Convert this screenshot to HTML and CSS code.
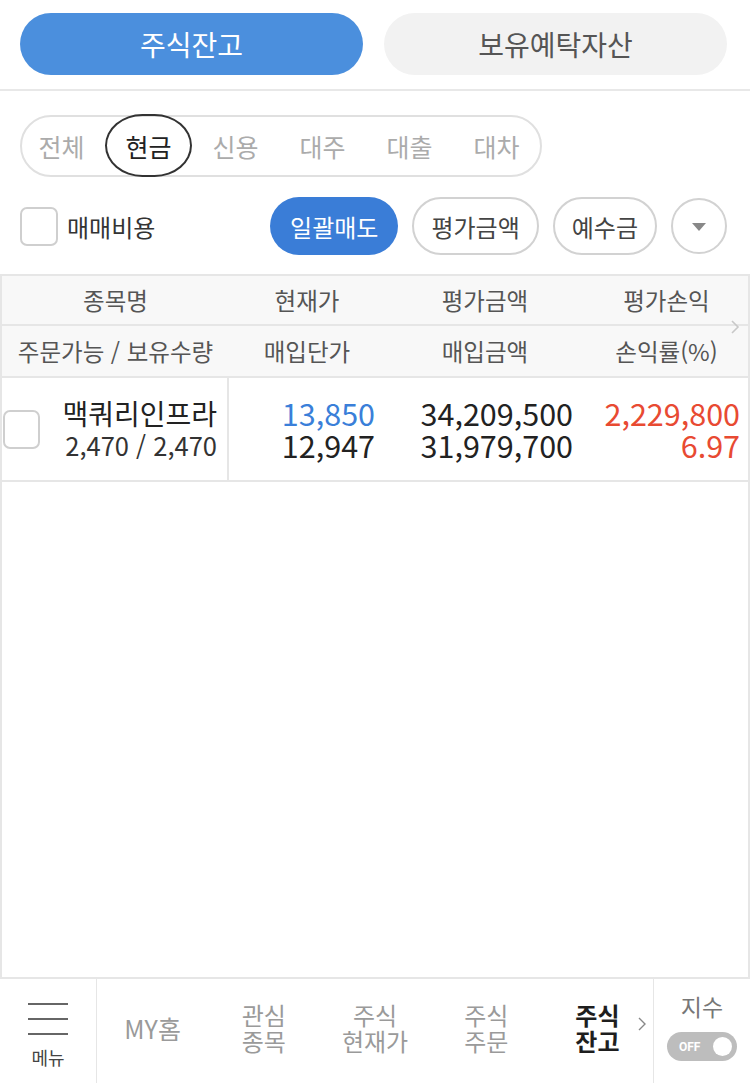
FILE: index.html
```html
<!DOCTYPE html>
<html lang="ko">
<head>
    <meta charset="UTF-8">
    <title>주식잔고</title>
    <link rel="stylesheet" href="styles.css">
</head>
<body>
    <div class="top-tabs">
        <button class="top-tab on">주식잔고</button>
        <button class="top-tab">보유예탁자산</button>
    </div>

    <div class="seg">
        <div class="seg-items">
            <span class="seg-item">전체</span>
            <span class="seg-item on">현금</span>
            <span class="seg-item">신용</span>
            <span class="seg-item">대주</span>
            <span class="seg-item">대출</span>
            <span class="seg-item">대차</span>
        </div>
    </div>

    <div class="action-row">
        <label class="chk-label"><span class="chk"></span>매매비용</label>
        <div class="action-btns">
            <button class="pill blue">일괄매도</button>
            <button class="pill">평가금액</button>
            <button class="pill">예수금</button>
            <button class="pill round" title="더보기">
                <svg width="16" height="10" viewBox="0 0 16 10"><path d="M1 1h14L8 9z" fill="#888"/></svg>
            </button>
        </div>
    </div>

    <!-- 잔고 테이블 -->
    <div class="table">
        <div class="thead">
            <div class="hrow">
                <span>종목명</span><span>현재가</span><span>평가금액</span><span>평가손익</span>
            </div>
            <div class="hrow">
                <span>주문가능 / 보유수량</span><span>매입단가</span><span>매입금액</span><span>손익률(%)</span>
            </div>
            <svg class="more" width="10" height="14" viewBox="0 0 10 14"><path d="M2 1l6 6-6 6" fill="none" stroke="#c8c8c8" stroke-width="1.6"/></svg>
        </div>
        <div class="trow">
            <div class="cell name-cell">
                <span class="chk"></span>
                <div class="name-text">
                    <div class="stock-name">맥쿼리인프라</div>
                    <div class="qty">2,470 / 2,470</div>
                </div>
            </div>
            <div class="cell num">
                <div class="blue-txt">13,850</div>
                <div>12,947</div>
            </div>
            <div class="cell num">
                <div>34,209,500</div>
                <div>31,979,700</div>
            </div>
            <div class="cell num last">
                <div class="red-txt">2,229,800</div>
                <div class="red-txt">6.97</div>
            </div>
        </div>
        <div class="tbody-empty"></div>
    </div>

    <!-- 하단 메뉴 -->
    <div class="nav">
        <div class="nav-menu">
            <span class="bar"></span><span class="bar"></span><span class="bar"></span>
            <span class="menu-txt">메뉴</span>
        </div>
        <div class="nav-items">
            <div class="nav-item">MY홈</div>
            <div class="nav-item">관심<br>종목</div>
            <div class="nav-item">주식<br>현재가</div>
            <div class="nav-item">주식<br>주문</div>
            <div class="nav-item on">주식<br>잔고
                <svg class="nav-arrow" width="10" height="16" viewBox="0 0 10 16"><path d="M2 2l6 6-6 6" fill="none" stroke="#888" stroke-width="1.4"/></svg>
            </div>
        </div>
        <div class="nav-index">
            <span class="index-txt">지수</span>
            <span class="toggle"><span class="toggle-txt">OFF</span><span class="knob"></span></span>
        </div>
    </div>
</body>
</html>
```

FILE: styles.css
```css
html, body {
    height: 100%;
}
body {
    margin: 0;
    height: 1083px;
    display: flex;
    flex-direction: column;
    background: #fff;
    color: #222;
    font-family: 'Noto Sans CJK KR', 'Noto Sans', sans-serif;
    overflow: hidden;
}
button {
    font-family: inherit;
    cursor: pointer;
}

/* 상단 탭 */
.top-tabs {
    display: flex;
    gap: 21px;
    padding: 13px 23px 14px 20px;
    border-bottom: 2px solid #e8e8e8;
}
.top-tab {
    flex: 1;
    height: 62px;
    border: none;
    border-radius: 31px;
    background: #f2f2f2;
    color: #555;
    font-size: 28px;
}
.top-tab.on {
    background: #4b8fdd;
    color: #fff;
}

/* 구분 필터 */
.seg {
    margin: 24px 0 0 20px;
    width: 518px;
    height: 58px;
    border: 2px solid #e0e0e0;
    border-radius: 31px;
}
.seg-items {
    display: flex;
    margin: -3px 0 0 -4px;
}
.seg-item {
    width: 87.5px;
    height: 63px;
    box-sizing: border-box;
    display: flex;
    align-items: center;
    justify-content: center;
    font-size: 25px;
    color: #ababab;
}
.seg-item.on {
    border: 2px solid #333;
    border-radius: 38px / 32px;
    color: #222;
}

/* 매매비용 + 버튼 */
.action-row {
    display: flex;
    align-items: center;
    justify-content: space-between;
    padding: 0 23px 0 20px;
    margin-top: 20px;
    height: 58px;
}
.chk-label {
    display: flex;
    align-items: center;
    gap: 9px;
    font-size: 24px;
    color: #333;
}
.chk {
    width: 38px;
    height: 39px;
    box-sizing: border-box;
    border: 2px solid #cfcfcf;
    border-radius: 7px;
    flex-shrink: 0;
    background: #fff;
}
.action-btns {
    display: flex;
    align-items: center;
    gap: 14px;
}
.pill {
    height: 58px;
    padding: 0 17px;
    border: 2px solid #d2d2d2;
    border-radius: 29px;
    background: #fff;
    color: #444;
    font-size: 24px;
}
.pill.blue {
    background: #3a7dd7;
    border: none;
    color: #fff;
    padding: 0 20px;
}
.pill.round {
    width: 56px;
    height: 56px;
    padding: 0;
    border-radius: 50%;
    display: flex;
    align-items: center;
    justify-content: center;
}
.pill.round svg { margin-top: 2px; }

/* 테이블 */
.table {
    flex: 1;
    margin-top: 19px;
    display: flex;
    flex-direction: column;
    border: 2px solid #e6e6e6;
    border-bottom: none;
}
.thead {
    position: relative;
    background: #f8f8f8;
}
.hrow {
    display: grid;
    grid-template-columns: 227px 156px 200px 163px;
    height: 48px;
    align-items: center;
    text-align: center;
    font-size: 23.5px;
    color: #555;
    border-bottom: 2px solid #e6e6e6;
}
.hrow + .hrow {
    height: 50px;
}
.more {
    position: absolute;
    right: 8px;
    top: 44px;
}
.trow {
    display: grid;
    grid-template-columns: 227px 156px 200px 163px;
    height: 102px;
    border-bottom: 2px solid #e6e6e6;
}
.cell {
    display: flex;
    flex-direction: column;
    justify-content: center;
    align-items: flex-end;
    font-size: 30.5px;
    line-height: 32px;
    color: #222;
}
.name-cell {
    flex-direction: row;
    align-items: center;
    justify-content: space-between;
    border-right: 2px solid #e6e6e6;
    padding: 0 10px 0 1px;
}
.name-cell .chk {
    width: 37px;
    margin-top: 1px;
}
.name-text {
    text-align: right;
}
.stock-name {
    font-size: 28px;
    line-height: 32px;
}
.qty {
    font-size: 25.5px;
    line-height: 32px;
    color: #333;
}
.num { padding-right: 10px; }
.num:nth-child(3) { padding-right: 12px; }
.num.last { padding-right: 8px; }
.blue-txt { color: #3a7fd9; }
.red-txt { color: #e84a32; }
.tbody-empty { flex: 1; }

/* 하단 메뉴 */
.nav {
    height: 104px;
    border-top: 2px solid #e6e6e6;
    display: flex;
}
.nav-menu {
    width: 97px;
    border-right: 1px solid #e6e6e6;
    display: flex;
    flex-direction: column;
    align-items: center;
    padding-top: 24px;
    box-sizing: border-box;
}
.bar {
    width: 40px;
    height: 2px;
    background: #666;
    margin-bottom: 13px;
}
.menu-txt {
    font-size: 18px;
    line-height: 22px;
    color: #444;
    margin-top: -2px;
}
.nav-items {
    flex: 1;
    display: flex;
}
.nav-item {
    flex: 1;
    position: relative;
    display: flex;
    align-items: center;
    justify-content: center;
    text-align: center;
    font-size: 24px;
    line-height: 26px;
    color: #9a9a9a;
    padding-bottom: 6px;
}
.nav-item:first-child { font-size: 25px; }
.nav-item.on {
    color: #1e1e1e;
    font-weight: 700;
}
.nav-arrow {
    position: absolute;
    right: 6px;
    top: 37px;
}
.nav-index {
    width: 97px;
    border-left: 1px solid #e6e6e6;
    display: flex;
    flex-direction: column;
    align-items: center;
    padding-top: 14px;
    box-sizing: border-box;
}
.index-txt {
    font-size: 23px;
    line-height: 26px;
    color: #777;
}
.toggle {
    margin-top: 13px;
    width: 70px;
    height: 29px;
    border-radius: 15px;
    background: #bdbdbd;
    display: flex;
    align-items: center;
    justify-content: space-between;
    padding: 0 5px 0 12px;
    box-sizing: border-box;
}
.toggle-txt {
    font-family: 'Roboto', sans-serif;
    font-size: 12px;
    font-weight: 700;
    color: #fff;
}
.knob {
    width: 19px;
    height: 19px;
    border-radius: 50%;
    background: #fff;
}
```
